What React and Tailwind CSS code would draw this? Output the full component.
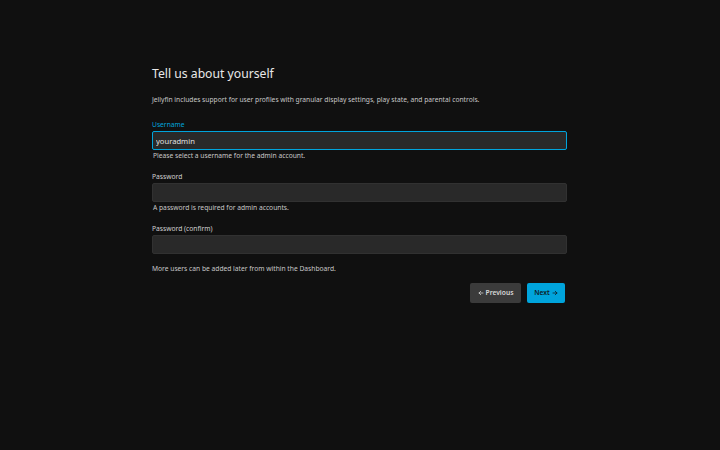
import React from 'react';

const ArrowLeft = () => (
  <svg width="6" height="6" viewBox="0 0 24 24" fill="none" stroke="currentColor" strokeWidth="3" strokeLinecap="round" strokeLinejoin="round">
    <path d="M20 12H4M11 5l-7 7 7 7" />
  </svg>
);

const ArrowRight = () => (
  <svg width="6" height="6" viewBox="0 0 24 24" fill="none" stroke="currentColor" strokeWidth="3" strokeLinecap="round" strokeLinejoin="round">
    <path d="M4 12h16M13 5l7 7-7 7" />
  </svg>
);

const Field = ({ label, value, helper, focused }) => (
  <div className={helper ? 'mb-[11px]' : ''}>
    <label className={`block text-[6.7px] leading-[10px] mb-[1px] ${focused ? 'text-[#00a4dc]' : 'text-[#d0d0d0]'}`}>
      {label}
    </label>
    <input
      type="text"
      defaultValue={value}
      className={`block w-full h-[19px] px-[3px] text-[7.6px] text-[#e0e0e0] bg-[#292929] rounded-[2px] outline-none border ${focused ? 'border-[#00a4dc]' : 'border-[#313131]'}`}
    />
    {helper ? (
      <p className="text-[6.7px] leading-[10px] mt-[1px] ml-[1px] text-[#c8c8c8]">{helper}</p>
    ) : null}
  </div>
);

const App = () => {
  return (
    <div className="w-[720px] h-[450px] bg-[#101010] text-[#e0e0e0] font-['Noto_Sans',sans-serif] pt-[64px]">
      <div className="w-[415px] ml-[152px]">
        <h1 className="text-[12.2px] leading-[20px] font-normal text-[#e8e8e8]">Tell us about yourself</h1>
        <p className="text-[6.7px] leading-[10px] mt-[11px] mb-[15px] text-[#c8c8c8]">
          Jellyfin includes support for user profiles with granular display settings, play state, and parental controls.
        </p>

        <Field label="Username" value="youradmin" helper="Please select a username for the admin account." focused />
        <Field label="Password" value="" helper="A password is required for admin accounts." />
        <Field label="Password (confirm)" value="" />

        <p className="text-[6.7px] leading-[10px] mt-[10px] text-[#c8c8c8]">More users can be added later from within the Dashboard.</p>

        <div className="flex justify-end gap-[6px] mt-[9px] pr-[2px]">
          <button className="h-[20px] w-[51px] bg-[#3b3b3b] text-[#d8d8d8] text-[6.7px] font-semibold rounded-[2px] flex items-center justify-center gap-[2px]">
            <ArrowLeft />Previous
          </button>
          <button className="h-[20px] w-[38px] bg-[#00a4dc] text-[#0e1a22] text-[6.7px] font-semibold rounded-[2px] flex items-center justify-center gap-[2px]">
            Next<ArrowRight />
          </button>
        </div>
      </div>
    </div>
  );
};

export default App;
